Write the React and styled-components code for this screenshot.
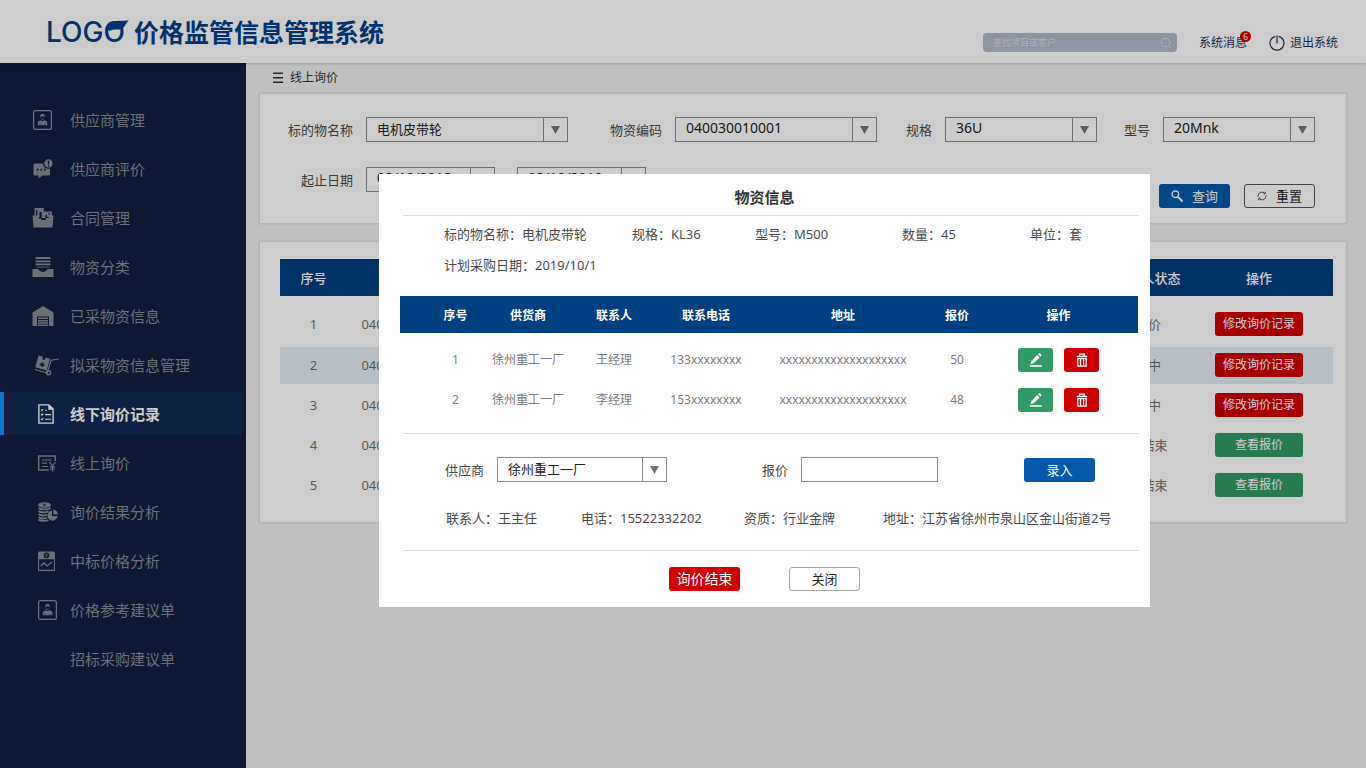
import React from 'react';
import styled, { createGlobalStyle, css } from 'styled-components';

const GlobalStyle = createGlobalStyle`
  *, *::before, *::after { box-sizing: border-box; }
  body {
    margin: 0;
    background: #f0f0f0;
    color: #4a4a4a;
    font-family: "Noto Sans", "Noto Sans CJK SC", sans-serif;
    font-size: 13px;
    line-height: 20px;
  }
  button, input, select { font: inherit; color: inherit; margin: 0; }
  button { cursor: pointer; }
`;

/* ---------- page frame ---------- */
const Page = styled.div`
  display: flex;
  flex-direction: column;
  min-height: 100vh;
`;
const Header = styled.header`
  display: flex;
  align-items: flex-start;
  justify-content: space-between;
  padding: 16px 28px 11px 46px;
  background: #fff;
  box-shadow: 0 1px 2px rgba(0, 0, 0, 0.2);
  position: relative;
`;
const Brand = styled.h1`
  display: flex;
  align-items: center;
  gap: 5px;
  margin: 0;
  font-size: 25px;
  font-weight: 700;
  line-height: 32px;
  color: #004088;
`;
const Logo = styled.span`
  position: relative;
  width: 83px;
  font-family: Inter, sans-serif;
  font-size: 28px;
  font-weight: 500;
`;
const Leaf = styled.svg`
  position: absolute;
  right: 0;
  top: 3px;
`;
const Tools = styled.div`
  display: flex;
  align-items: center;
  margin-top: 17px;
  font-size: 12px;
  line-height: 19px;
  color: #25305a;
`;
const Search = styled.label`
  display: flex;
  align-items: center;
  width: 194px;
  height: 19px;
  padding: 0 5px 0 10px;
  border-radius: 4px;
  background: #b2bac8;
`;
const SearchInput = styled.input`
  flex: 1;
  min-width: 0;
  padding: 0;
  border: 0;
  outline: 0;
  background: none;
  font-size: 9px;
  &::placeholder { color: #dadde3; opacity: 1; }
`;
const ToolLink = styled.a`
  position: relative;
  display: flex;
  align-items: center;
  gap: 5px;
  margin-left: 22px;
  color: inherit;
  text-decoration: none;
`;
const Badge = styled.span`
  position: absolute;
  top: -2px;
  right: -4px;
  width: 11px;
  height: 11px;
  border-radius: 50%;
  background: #d40000;
  color: #fff;
  font-size: 8px;
  line-height: 11px;
  text-align: center;
`;
const Body = styled.div`
  display: flex;
  flex: 1;
`;

/* ---------- sidebar ---------- */
const Sidebar = styled.nav`
  flex: none;
  width: 246px;
  padding: 35px 4px 0 0;
  background: #121f3c;
`;
const NavList = styled.ul`
  display: flex;
  flex-direction: column;
  gap: 6px;
  margin: 0;
  padding: 0;
  list-style: none;
`;
const NavLink = styled.a`
  display: flex;
  align-items: center;
  height: 43px;
  padding-left: 28px;
  border-left: 4px solid transparent;
  font-size: 15px;
  color: #868b95;
  text-decoration: none;
  ${(p) => p.$active && css`
    border-left-color: #1792ff;
    background: #142850;
    color: #fff;
    font-weight: 700;
  `}
`;
const IconSlot = styled.span`
  display: flex;
  flex: none;
  width: 38px;
  padding-left: ${(p) => p.$inset}px;
`;

/* ---------- main area ---------- */
const Main = styled.main`
  flex: 1;
  min-width: 0;
  padding: 0 20px 20px 14px;
`;
const Crumb = styled.div`
  display: flex;
  align-items: center;
  gap: 7px;
  height: 31px;
  padding: 0 0 2px 13px;
  font-size: 12px;
  color: #333;
`;
const Panel = styled.section`
  background: #fff;
  box-shadow: 0 0 2px 1px rgba(0, 0, 0, 0.1);
`;
const FilterPanel = styled(Panel)`
  padding: 23px 31px 15px 0;
  margin-bottom: 19px;
`;
const FilterRow = styled.div`
  display: grid;
  grid-template-columns: 308fr 309fr 220fr 218fr;
`;
const DateRow = styled.div`
  display: flex;
  align-items: flex-start;
  gap: 22px;
  margin-top: 25px;
  padding-left: 41px;
`;
const Actions = styled.div`
  display: flex;
  gap: 14px;
  margin-left: auto;
  padding-top: 17px;
`;
const FieldBox = styled.div`
  display: flex;
  align-items: center;
  justify-content: ${(p) => (p.$end ? 'flex-end' : 'flex-start')};
  gap: 13px;
`;
const SelectBox = styled.span`
  display: grid;
  grid-template-columns: 1fr 24px;
  flex: none;
  width: ${(p) => p.$width}px;
  height: 25px;
  border: 1px solid #8c8c8c;
`;
const NativeSelect = styled.select`
  grid-area: 1 / 1 / 2 / 3;
  appearance: none;
  padding: 0 26px ${(p) => (p.$numeric ? 4 : 2)}px 10px;
  border: 0;
  outline: 0;
  background: none;
  color: #222;
  font-size: ${(p) => (p.$numeric ? 14 : 13)}px;
`;
const Arrow = styled.span`
  grid-area: 1 / 2 / 2 / 3;
  display: flex;
  align-items: center;
  justify-content: center;
  border-left: 1px solid #8c8c8c;
  pointer-events: none;
`;

const tones = {
  blue: ['#0459ad', '#fff'],
  red: ['#d00000', '#fff'],
  green: ['#339966', '#fff'],
  plain: ['#fff', '#222'],
};
const Button = styled.button`
  display: inline-flex;
  align-items: center;
  justify-content: center;
  gap: 9px;
  width: ${(p) => p.$width || 71}px;
  height: 24px;
  padding: 0;
  border: ${(p) => (p.$tone === 'plain' ? `1px solid ${p.$edge || '#a8a8a8'}` : '0')};
  border-radius: 3px;
  background: ${(p) => tones[p.$tone][0]};
  color: ${(p) => tones[p.$tone][1]};
  font-size: ${(p) => p.$size || 13}px;
  line-height: 20px;
  vertical-align: middle;
`;

/* ---------- tables ---------- */
const Table = styled.table`
  width: 100%;
  table-layout: fixed;
  border-spacing: 0;
  text-align: center;
`;
const InquiryTable = styled(Table)`
  border-spacing: 0 3px;
  th, td { height: 37px; padding: 0; white-space: nowrap; }
  th { background: #003f80; color: #fff; font-weight: 500; }
  td { padding-bottom: 2px; color: #707070; }
  tbody tr:first-child td { height: 45px; padding-top: 6px; }
  tbody tr:nth-child(2) td { background: #e6eff5; }
`;
const TablePanel = styled(Panel)`
  padding: 14px 13px 15px 20px;
`;

/* ---------- dialog ---------- */
const Backdrop = styled.div`
  position: fixed;
  inset: 0;
  display: flex;
  align-items: center;
  justify-content: center;
  padding: 13px 0 0 163px;
  background: rgba(0, 0, 0, 0.2);
`;
const Dialog = styled.div`
  width: 771px;
  max-width: 100%;
  padding-bottom: 16px;
  background: #fff;
`;
const DialogTitle = styled.h2`
  margin: 0;
  padding-top: 6px;
  font-size: 15px;
  font-weight: 700;
  line-height: 35px;
  text-align: center;
  color: #333;
`;
const Divider = styled.hr`
  height: 1px;
  margin: 0 11px 0 24px;
  border: 0;
  background: #dedede;
`;
const InfoGrid = styled.div`
  display: grid;
  grid-template-columns: 188fr 123fr 147fr 128fr 109fr;
  padding: 3px 11px 15px 65px;
  line-height: 31px;
`;
const SupplierTable = styled(Table)`
  width: auto;
  min-width: calc(100% - 33px);
  margin: 0 12px 13px 21px;
  font-size: 12px;
  th, td { height: 40px; padding: 0; }
  th { height: 37px; padding-top: 3px; background: #003f80; color: #fff; font-weight: 700; }
  td { color: #7a7a7a; }
  th:first-child, td:first-child { padding-left: 26px; }
  th:last-child, td:last-child { padding-right: 4px; }
  tbody tr:first-child td { height: 47px; padding-top: 7px; }
`;
const IconButtons = styled.div`
  display: flex;
  justify-content: center;
  gap: 11px;
`;
const EntryRow = styled.form`
  display: grid;
  grid-template-columns: 317fr 262fr 114fr;
  align-items: center;
  padding: 23px 12px 26px 66px;
`;
const PriceInput = styled.input`
  width: 137px;
  height: 25px;
  padding: 0 8px;
  border: 1px solid #8c8c8c;
  outline: 0;
`;
const ContactRow = styled.div`
  display: grid;
  grid-template-columns: 135fr 163fr 139fr 256fr;
  padding: 0 11px 22px 67px;
  white-space: nowrap;
`;
const DialogFooter = styled.div`
  display: flex;
  justify-content: center;
  gap: 49px;
  padding-top: 16px;
`;

/* ---------- icons ---------- */
const NavSvg = ({ w = 22, children }) => (
  <svg width={w} height="22" viewBox={`0 0 ${w} 22`} fill="currentColor" aria-hidden="true">{children}</svg>
);
const line = { fill: 'none', stroke: 'currentColor' };

const CardIcon = () => (
  <NavSvg>
    <rect x="1.600" y="1.600" width="17.800" height="18.800" rx="2" {...line} strokeWidth="1.300" />
    <path d="M8.300 8.300c-.8-4.600 5.200-4.600 4.400 0C12 7 9.500 7 8.300 8.300z" />
    <path d="M9 9.500c.5 1.300 2.500 1.300 3 0" {...line} strokeWidth=".8" />
    <path d="M5.800 16.300v-1.800c0-2 1.200-2.700 2.700-3.300l2 1.100 2-1.100c1.500.6 2.700 1.300 2.700 3.300v1.800z" />
    <path d="M8 14.300v2M13 14.300v2" stroke="#121f3c" strokeWidth=".6" />
  </NavSvg>
);
const ChatIcon = () => (
  <NavSvg>
    <path fillRule="evenodd" d="M3 5.500h8.200a5 5 0 0 0 6.800 5V16a1.500 1.500 0 0 1-1.500 1.500h-6L6.500 20.500v-3H3A1.500 1.500 0 0 1 1.500 16V7A1.500 1.500 0 0 1 3 5.500zm1.800 5.300v1.800h1.800v-1.800zm3.600 0v1.800h1.800v-1.800zm3.600 0v1.800h1.800v-1.800z" />
    <path fillRule="evenodd" d="M16.500 1.200a4.200 4.200 0 1 1 0 8.400 4.200 4.200 0 0 1 0-8.400zm-.8 1.500.3 3.600h1l.3-3.600zm.2 4.300v1.200h1.200V7z" />
  </NavSvg>
);
const FolderIcon = () => (
  <NavSvg>
    <path fillRule="evenodd" d="M2.500 1h9.300v3.500H20V10h-5V8h-1.500v3H9.700V5H7.500v5h-5zM4 2.500V9h1.300V3.500zM16.500 6v1.500H18V6z" />
    <path d="M.5 8.500h6.300v3.200H9.500v1.300h4.300v-2h3V8.500h4.700l-1 12H1.500z" />
  </NavSvg>
);
const TrayIcon = () => (
  <NavSvg>
    <path d="M3.500 1h15v2h-15zM3.500 4.500h15v1.700h-15zM3.500 7.600h15v1.700h-15zM4.500 10.700h13v.9h-13zM.5 13h5.300c1.600 0 1.600 3 5.200 3s3.600-3 5.200-3h5.300v8H.500z" />
  </NavSvg>
);
const WarehouseIcon = () => (
  <NavSvg>
    <path d="M.5 7.500 11 1l10.500 6.500V21H17v-9.500H5V21H.5zM6 12.600h10v1.500H6zM6 15h10v1.500H6zM6 17.300h10v1.500H6zM6 19.600h10V21H6z" />
  </NavSvg>
);
const TrolleyIcon = () => (
  <NavSvg w={26}>
    <path fillRule="evenodd" d="m4.500 1.500 4.500 1.200-.7 2.600 2.500.7.700-2.600L16 4.700 12.700 16.500 1.300 13.300zM8 8.300l-.4 1.500-1.700-.3-.2 1.500 1.600.4-.3 1.300 1.500.4.300-1.300 1.700.4.300-1.500-1.700-.4.400-1.500z" />
    <path d="M1 15.500 13 19 17.200 6.200 25 5" {...line} strokeWidth="1.200" />
    <circle cx="14.500" cy="18.800" r="2" {...line} strokeWidth="1.500" />
  </NavSvg>
);
const ChecklistIcon = () => (
  <NavSvg>
    <path d="M1.900 1.900h10l4.200 4.200v14H1.900z" {...line} strokeWidth="1.400" />
    <path d="M11.300 1.500v5.300h5.200z" />
    <path d="m4 6.700.9.900 1.300-1.600M4 11.300l.9.900 1.300-1.600M4 15.900l.9.900 1.300-1.600M8 7.300h2M8 11.600h6M8 16.200h6" {...line} strokeWidth="1.100" />
  </NavSvg>
);
const QuoteIcon = () => (
  <NavSvg>
    <path d="M18.300 9V3.900H1.700v14.200h10" {...line} strokeWidth="1.500" />
    <path d="M5 8h9.500M5 11.200h5M5 14.500h6M12.500 10l3 4 3-4M15.500 14v5.500M13 14.800h5M13 17h5" {...line} strokeWidth="1.200" />
  </NavSvg>
);
const CoinsIcon = () => (
  <NavSvg>
    <path fillRule="evenodd" d="M7.500 1.300c3.700 0 6.500 1.200 6.500 2.800s-2.800 2.800-6.500 2.800S1 5.700 1 4.100s2.800-2.800 6.500-2.800zM5.800 2.800l1.200 1.400v1.400h1V4.200l1.200-1.400h-1l-.7.9-.7-.9z" />
    <path d="M1.500 7c2 1.800 9.500 1.800 12 0M1.500 10c2 1.800 7.500 1.800 10 .4M1.500 13c2 1.500 6 1.600 8.500.8M1.500 16c2 1.500 6 1.600 8.500.8M1.500 18.500c2 1.800 7 1.800 10 .5" {...line} strokeWidth="1.900" />
    <path d="M15 9.500V15h5.600A5.100 5.100 0 1 1 15 9.500z" />
    <path d="M16.300 8.600a5 5 0 0 1 4.700 5h-4.700z" />
  </NavSvg>
);
const ChartCardIcon = () => (
  <NavSvg>
    <path fillRule="evenodd" d="M2.500 1.500h14a1.500 1.500 0 0 1 1.500 1.500v17a1 1 0 0 1-1 1H2a1 1 0 0 1-1-1V3a1.500 1.500 0 0 1 1.500-1.500zM2.100 9.200v10.600h14.800V9.200zM9.500 2.600a2.800 2.800 0 1 0 0 5.600 2.800 2.800 0 0 0 0-5.600z" />
    <path d="m8.200 3.800 1.300 1.500 1.300-1.500M9.500 5.300v2" {...line} strokeWidth=".9" />
    <path d="m3.800 16 3.200-3 3 3 5-4" {...line} strokeWidth="1.300" />
  </NavSvg>
);
const SearchGlyph = () => (
  <svg width="12" height="12" viewBox="0 0 12 12" fill="none" stroke="#dadde3" aria-hidden="true">
    <circle cx="5.500" cy="5.500" r="4.300" /><path d="m8.700 8.700 2.500 2.500" />
  </svg>
);
const PowerIcon = () => (
  <svg width="16" height="16" viewBox="0 0 16 16" fill="none" stroke="currentColor" strokeWidth="1.200" aria-hidden="true">
    <path d="M6.300 1.300a7 7 0 1 0 3.400 0M8 .5V8.500" />
  </svg>
);
const MenuIcon = () => (
  <svg width="10" height="11" viewBox="0 0 10 11" fill="#333" aria-hidden="true">
    <path d="M0 .5h10V2H0zM0 5h10v1.500H0zM0 9.500h10V11H0z" />
  </svg>
);
const QueryIcon = () => (
  <svg width="12" height="12" viewBox="0 0 12 12" fill="none" stroke="currentColor" aria-hidden="true">
    <circle cx="4.300" cy="4.300" r="3.300" strokeWidth="1.300" /><path d="m7 7 4 4" strokeWidth="2" strokeLinecap="round" />
  </svg>
);
const ResetIcon = () => (
  <svg width="10" height="10" viewBox="0 0 10 10" fill="none" stroke="#555" aria-hidden="true">
    <path d="M1 5.800V4.800A4 4 0 0 1 8 2.500M9 4.200v1A4 4 0 0 1 2 7.500M8.300.8v2H6.500M1.700 9.200v-2h1.800" />
  </svg>
);
const PencilIcon = () => (
  <svg width="14" height="14" viewBox="0 0 14 14" fill="#fff" aria-hidden="true">
    <path d="M1 12.200h12v1.600H1zM1.300 11.200l1-3.300 5.900-5.900 2.400 2.400-5.900 5.900zM9 1.300l.7-.8c.5-.5 1-.5 1.500 0l1 1c.5.5.5 1 0 1.500l-.8.700z" />
  </svg>
);
const TrashIcon = () => (
  <svg width="12" height="14" viewBox="0 0 12 14" aria-hidden="true">
    <path fill="none" stroke="#fff" strokeWidth="1.300" d="M3.800 2.800V1.200h4.400v1.600M.8 3.500h10.400M1.800 5.600h8.400v7.600H1.800z" />
    <path stroke="#fff" strokeWidth="1.200" d="M4.500 5.500V13M7.500 5.500V13" />
  </svg>
);

/* ---------- composed parts ---------- */
const Select = ({ id, value, width, numeric }) => (
  <SelectBox $width={width}>
    <NativeSelect id={id} defaultValue={value} $numeric={numeric} aria-label={id ? undefined : '截止日期'}>
      <option>{value}</option>
    </NativeSelect>
    <Arrow>
      <svg width="9" height="8" viewBox="0 0 9 8" fill="#757575" aria-hidden="true"><path d="M0 0h9L4.500 8z" /></svg>
    </Arrow>
  </SelectBox>
);
const Field = ({ label, id, end, ...rest }) => (
  <FieldBox $end={end}>
    <label htmlFor={id}>{label}</label>
    <Select id={id} {...rest} />
  </FieldBox>
);

const nav = [
  ['供应商管理', CardIcon, 0],
  ['供应商评价', ChatIcon, 0],
  ['合同管理', FolderIcon, 0],
  ['物资分类', TrayIcon, 0],
  ['已采物资信息', WarehouseIcon, 0],
  ['拟采物资信息管理', TrolleyIcon, 2],
  ['线下询价记录', ChecklistIcon, 5],
  ['线上询价', QuoteIcon, 5],
  ['询价结果分析', CoinsIcon, 5],
  ['中标价格分析', ChartCardIcon, 5],
  ['价格参考建议单', CardIcon, 5],
  ['招标采购建议单', null, 0],
];
const inquiries = [
  ['询价', true], ['询中', true], ['询中', true], ['已结束', false], ['已结束', false],
];
const suppliers = [
  ['1', '徐州重工一厂', '王经理', '133xxxxxxxx', '50'],
  ['2', '徐州重工一厂', '李经理', '153xxxxxxxx', '48'],
];

export default function App() {
  return (
    <>
      <GlobalStyle />
      <Page>
        <Header>
          <Brand>
            <Logo>
              LOGO
              <Leaf width="22" height="13" viewBox="0 0 22 13" aria-hidden="true">
                <path d="M1 10C2 5 6 1.800 12 1.800c4 0 7-.2 10-.6-3 2-3 6-7 8.300C11 12 9 9 2 12z" fill="#004088" />
              </Leaf>
            </Logo>
            价格监管信息管理系统
          </Brand>
          <Tools>
            <Search>
              <SearchInput type="search" placeholder="查找项目或客户" aria-label="查找项目或客户" />
              <SearchGlyph />
            </Search>
            <ToolLink href="#messages">系统消息<Badge>6</Badge></ToolLink>
            <ToolLink href="#logout"><PowerIcon />退出系统</ToolLink>
          </Tools>
        </Header>
        <Body>
          <Sidebar>
            <NavList>
              {nav.map(([name, Icon, inset], i) => (
                <li key={name}>
                  <NavLink href={`#nav-${i}`} $active={i === 6}>
                    <IconSlot $inset={inset}>{Icon && <Icon />}</IconSlot>
                    {name}
                  </NavLink>
                </li>
              ))}
            </NavList>
          </Sidebar>
          <Main>
            <Crumb><MenuIcon />线上询价</Crumb>
            <FilterPanel>
              <FilterRow>
                <Field end id="name" label="标的物名称" value="电机皮带轮" width={202} />
                <Field end id="code" label="物资编码" value="040030010001" width={202} numeric />
                <Field end id="spec" label="规格" value="36U" width={152} numeric />
                <Field end id="model" label="型号" value="20Mnk" width={152} numeric />
              </FilterRow>
              <DateRow>
                <Field id="from" label="起止日期" value="08/10/2018" width={129} numeric />
                <Select value="08/10/2019" width={129} numeric />
                <Actions>
                  <Button type="button" $tone="blue"><QueryIcon />查询</Button>
                  <Button type="button" $tone="plain" $edge="#555"><ResetIcon />重置</Button>
                </Actions>
              </DateRow>
            </FilterPanel>
            <TablePanel>
              <InquiryTable>
                <colgroup>
                  <col width="67" /><col width="118" /><col /><col width="74" /><col width="148" />
                </colgroup>
                <thead>
                  <tr>
                    <th>序号</th><th /><th /><th>询价人状态</th><th>操作</th>
                  </tr>
                </thead>
                <tbody>
                  {inquiries.map(([status, editable], i) => (
                    <tr key={i}>
                      <td>{i + 1}</td><td>040030010001</td><td /><td>{status}</td>
                      <td>
                        <Button type="button" $width={88} $size={12} $tone={editable ? 'red' : 'green'}>
                          {editable ? '修改询价记录' : '查看报价'}
                        </Button>
                      </td>
                    </tr>
                  ))}
                </tbody>
              </InquiryTable>
            </TablePanel>
          </Main>
        </Body>
      </Page>

      <Backdrop>
        <Dialog role="dialog" aria-modal="true" aria-labelledby="dialog-title">
          <DialogTitle id="dialog-title">物资信息</DialogTitle>
          <Divider />
          <InfoGrid>
            <span>标的物名称：电机皮带轮</span>
            <span>规格：KL36</span>
            <span>型号：M500</span>
            <span>数量：45</span>
            <span>单位：套</span>
            <span>计划采购日期：2019/10/1</span>
          </InfoGrid>
          <SupplierTable>
            <colgroup>
              <col width="85" /><col width="86" /><col width="86" /><col width="98" /><col width="176" /><col width="52" /><col width="155" />
            </colgroup>
            <thead>
              <tr><th>序号</th><th>供货商</th><th>联系人</th><th>联系电话</th><th>地址</th><th>报价</th><th>操作</th></tr>
            </thead>
            <tbody>
              {suppliers.map(([no, name, contact, phone, price]) => (
                <tr key={no}>
                  <td>{no}</td><td>{name}</td><td>{contact}</td><td>{phone}</td><td>xxxxxxxxxxxxxxxxxxxx</td><td>{price}</td>
                  <td>
                    <IconButtons>
                      <Button type="button" $width={35} $tone="green" aria-label="编辑"><PencilIcon /></Button>
                      <Button type="button" $width={35} $tone="red" aria-label="删除"><TrashIcon /></Button>
                    </IconButtons>
                  </td>
                </tr>
              ))}
            </tbody>
          </SupplierTable>
          <Divider />
          <EntryRow>
            <Field id="supplier" label="供应商" value="徐州重工一厂" width={170} />
            <FieldBox>
              <label htmlFor="price">报价</label>
              <PriceInput id="price" type="text" />
            </FieldBox>
            <Button type="button" $tone="blue">录入</Button>
          </EntryRow>
          <ContactRow>
            <span>联系人：王主任</span>
            <span>电话：15522332202</span>
            <span>资质：行业金牌</span>
            <span>地址：江苏省徐州市泉山区金山街道2号</span>
          </ContactRow>
          <Divider />
          <DialogFooter>
            <Button type="button" $tone="red" $size={14}>询价结束</Button>
            <Button type="button" $tone="plain">关闭</Button>
          </DialogFooter>
        </Dialog>
      </Backdrop>
    </>
  );
}
